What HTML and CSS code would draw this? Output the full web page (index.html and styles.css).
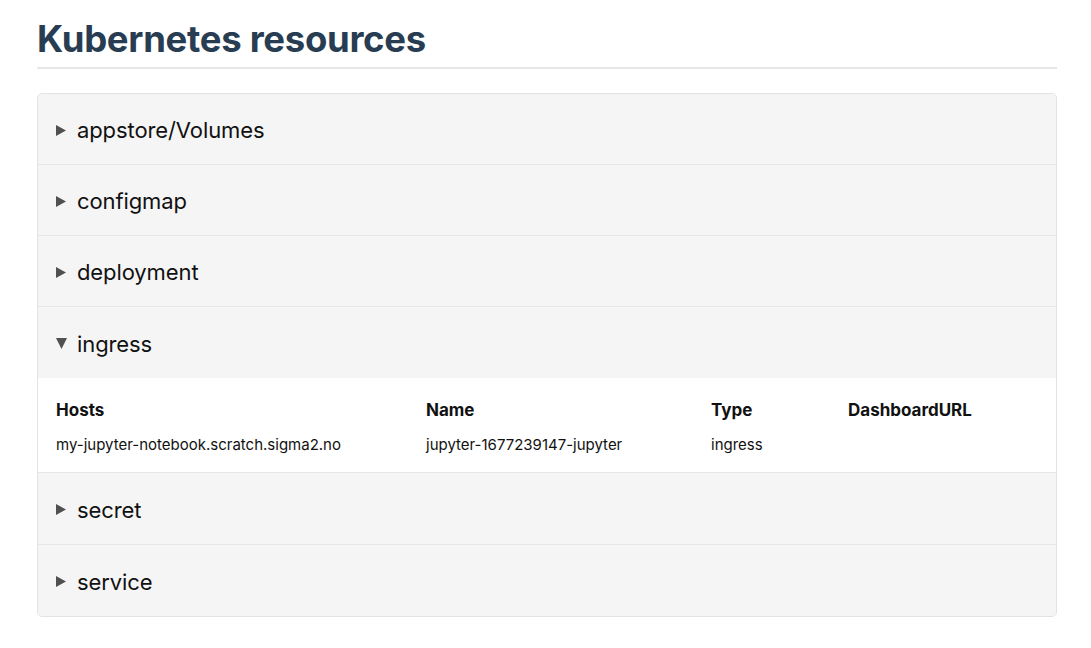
FILE: index.html
```html
<!DOCTYPE html>
<html>
<head>
<meta charset="utf-8">
<link rel="stylesheet" href="styles.css">
</head>
<body>
<main class="page">
  <h1 class="title">Kubernetes resources</h1>
  <div class="card">
    <div class="section">
      <div class="summary"><svg class="marker" viewBox="0 0 10 11"><polygon points="0,0 10,5.5 0,11"/></svg><span class="label">appstore/Volumes</span></div>
    </div>
    <div class="section">
      <div class="summary"><svg class="marker" viewBox="0 0 10 11"><polygon points="0,0 10,5.5 0,11"/></svg><span class="label">configmap</span></div>
    </div>
    <div class="section">
      <div class="summary"><svg class="marker" viewBox="0 0 10 11"><polygon points="0,0 10,5.5 0,11"/></svg><span class="label">deployment</span></div>
    </div>
    <div class="section open">
      <div class="summary"><svg class="marker down" viewBox="0 0 11 11"><polygon points="0,0 11,0 5.5,11"/></svg><span class="label">ingress</span></div>
      <div class="content">
        <div class="table">
          <div class="th">Hosts</div>
          <div class="th">Name</div>
          <div class="th">Type</div>
          <div class="th">DashboardURL</div>
          <div class="td">my-jupyter-notebook.scratch.sigma2.no</div>
          <div class="td">jupyter-1677239147-jupyter</div>
          <div class="td">ingress</div>
          <div class="td"></div>
        </div>
      </div>
    </div>
    <div class="section after">
      <div class="summary"><svg class="marker" viewBox="0 0 10 11"><polygon points="0,0 10,5.5 0,11"/></svg><span class="label">secret</span></div>
    </div>
    <div class="section after">
      <div class="summary"><svg class="marker" viewBox="0 0 10 11"><polygon points="0,0 10,5.5 0,11"/></svg><span class="label">service</span></div>
    </div>
  </div>
</main>
</body>
</html>
```

FILE: styles.css
```css
* { box-sizing: border-box; }
html, body { margin: 0; padding: 0; background: #fff; }
body {
  font-family: Inter, "Liberation Sans", Arial, sans-serif;
  color: #111;
}
.page {
  padding: 14px 34px 0 37px;
}
.title {
  margin: 0;
  font-size: 36.5px;
  font-weight: 700;
  line-height: 50px;
  color: #283d52;
  letter-spacing: -0.3px;
  padding-bottom: 3px;
  border-bottom: 2px solid #e6e6e6;
}
.card {
  margin-top: 24px;
  border: 1px solid #e3e3e3;
  border-radius: 5px;
  background: #f5f5f5;
  overflow: hidden;
}
.section + .section { border-top: 1px solid #e6e6e6; }
.summary {
  display: flex;
  align-items: center;
  height: 70px;
  padding: 2px 18px 0;
  background: #f5f5f5;
}
.after .summary { height: 71px; }
.marker {
  width: 10px;
  height: 11px;
  margin-right: 11px;
  fill: #505050;
  flex: none;
}
.marker.down {
  width: 11px;
  margin-right: 10px;
}
.label {
  font-size: 22px;
  color: #111;
  letter-spacing: -0.1px;
}
.open .summary { height: 71px; }
.content {
  background: #fff;
  padding: 21px 18px 18px;
  height: 94px;
}
.table {
  display: grid;
  grid-template-columns: 370px 285px 137px 1fr;
  row-gap: 14px;
}
.th {
  font-size: 17px;
  font-weight: 700;
  line-height: 22px;
  color: #111;
}
.td {
  font-size: 15px;
  line-height: 20px;
  color: #111;
}
```
